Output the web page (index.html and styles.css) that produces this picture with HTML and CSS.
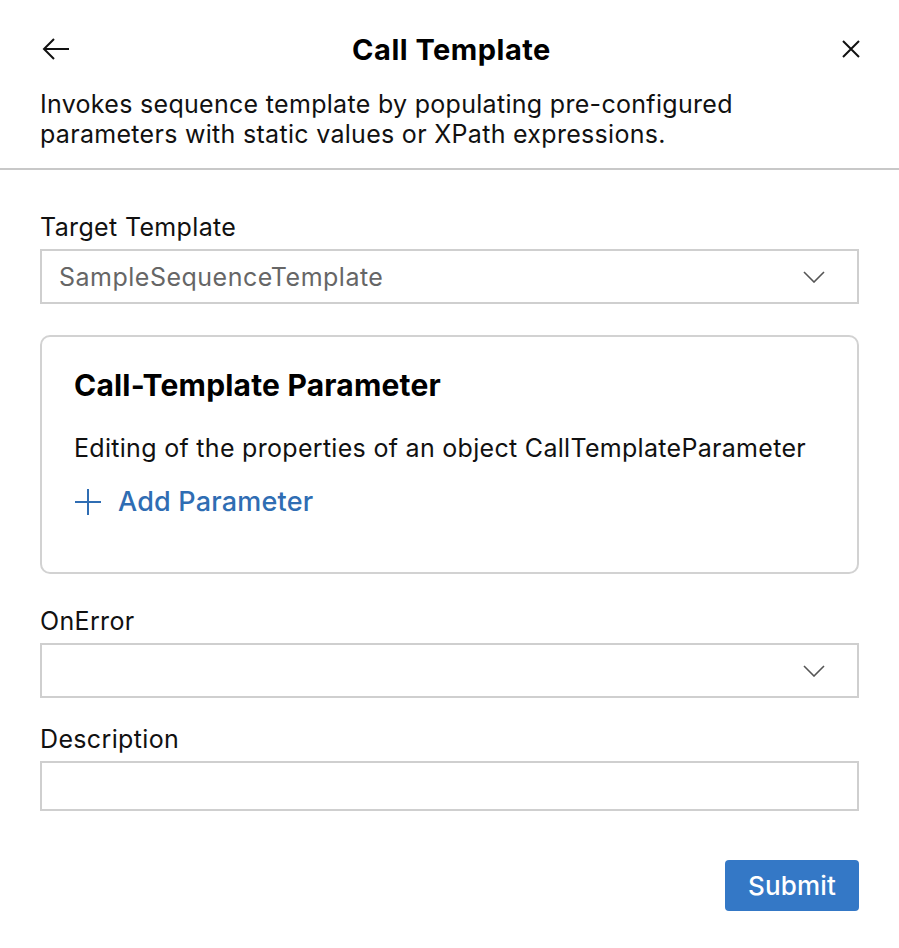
FILE: index.html
```html
<!DOCTYPE html>
<html lang="en">
<head>
<meta charset="utf-8">
<title>Call Template</title>
<link rel="stylesheet" href="styles.css">
</head>
<body>
<div class="panel">
  <header class="top">
    <div class="head-row">
      <button class="icon-btn back" aria-label="Back">
        <svg width="28" height="22" viewBox="0 0 28 22"><path d="M27 11H2M12 1L2 11l10 10" fill="none" stroke="#111" stroke-width="2"/></svg>
      </button>
      <h1 class="title">Call Template</h1>
      <button class="icon-btn close" aria-label="Close">
        <svg width="20" height="20" viewBox="0 0 20 20"><path d="M2 2l16 16M18 2L2 18" fill="none" stroke="#111" stroke-width="2"/></svg>
      </button>
    </div>
    <p class="desc">Invokes sequence template by populating pre-configured parameters with static values or XPath expressions.</p>
  </header>
  <form class="form">
    <div class="field">
      <label class="label">Target Template</label>
      <div class="select">
        <span class="select-value">SampleSequenceTemplate</span>
        <svg class="chev" width="22" height="12" viewBox="0 0 22 12"><path d="M1 1l10 10L21 1" fill="none" stroke="#555" stroke-width="1.6"/></svg>
      </div>
    </div>
    <section class="card">
      <h2 class="card-title">Call-Template Parameter</h2>
      <p class="card-text">Editing of the properties of an object CallTemplateParameter</p>
      <a class="add-link" href="#">
        <svg width="28" height="28" viewBox="0 0 28 28"><path d="M14 1v26M1 14h26" fill="none" stroke="#2f6db3" stroke-width="2"/></svg>
        <span>Add Parameter</span>
      </a>
    </section>
    <div class="field">
      <label class="label">OnError</label>
      <div class="select">
        <span class="select-value"></span>
        <svg class="chev" width="22" height="12" viewBox="0 0 22 12"><path d="M1 1l10 10L21 1" fill="none" stroke="#555" stroke-width="1.6"/></svg>
      </div>
    </div>
    <div class="field field-gap">
      <label class="label">Description</label>
      <div class="input"></div>
    </div>
    <div class="actions">
      <button type="button" class="submit">Submit</button>
    </div>
  </form>
</div>
</body>
</html>
```
FILE: styles.css
```css
* { box-sizing: border-box; }
html, body { margin: 0; padding: 0; background: #fff; }
body {
  font-family: Inter, "Noto Sans", "Liberation Sans", sans-serif;
  color: #111;
  -webkit-font-smoothing: antialiased;
}
.panel { width: 899px; }
.top {
  padding: 22px 40px 19px;
  border-bottom: 2px solid #c8c8c8;
}
.head-row {
  display: flex;
  align-items: center;
  justify-content: space-between;
  height: 54px;
}
.icon-btn {
  background: none;
  border: 0;
  padding: 0;
  width: 30px;
  display: flex;
  align-items: center;
  cursor: pointer;
}
.back { justify-content: flex-start; margin-left: 2px; }
.close { justify-content: flex-end; margin-right: -2px; }
.title {
  margin: 0;
  font-size: 29px;
  font-weight: 700;
  letter-spacing: 0.5px;
  color: #000;
}
.desc {
  margin: 13px 0 0;
  font-size: 25px;
  line-height: 30px;
  font-weight: 400;
  letter-spacing: 0.3px;
}
.form {
  padding: 42px 40px 30px;
  display: flex;
  flex-direction: column;
}
.field { display: flex; flex-direction: column; }
.label {
  font-size: 25px;
  line-height: 30px;
  letter-spacing: 0.35px;
  margin-bottom: 7px;
}
.select, .input {
  height: 55px;
  border: 2px solid #cfcfcf;
  display: flex;
  align-items: center;
  justify-content: space-between;
  padding: 0 32px 0 17px;
}
.input { height: 50px; }
.select-value { font-size: 25px; color: #666; letter-spacing: 0.5px; }
.card {
  margin: 31px 0 32px;
  border: 2px solid #d2d2d2;
  border-radius: 10px;
  padding: 30px 32px 52px;
}
.card-title {
  margin: 0;
  font-size: 30px;
  line-height: 36px;
  font-weight: 700;
  letter-spacing: 0.2px;
  color: #000;
}
.card-text {
  margin: 30px 0 0;
  font-size: 25px;
  line-height: 30px;
  letter-spacing: 0.3px;
}
.add-link {
  margin-top: 22px;
  display: inline-flex;
  align-items: center;
  gap: 16px;
  color: #2f6db3;
  text-decoration: none;
  font-size: 27px;
  line-height: 34px;
  font-weight: 500;
  letter-spacing: 0.2px;
}
.field-gap { margin-top: 26px; }
.actions {
  display: flex;
  justify-content: flex-end;
  margin-top: 49px;
}
.submit {
  width: 134px;
  height: 51px;
  border: 0;
  border-radius: 4px;
  background: #3478c6;
  color: #fff;
  font-family: inherit;
  font-size: 26px;
  font-weight: 500;
  letter-spacing: 0.2px;
}
```
